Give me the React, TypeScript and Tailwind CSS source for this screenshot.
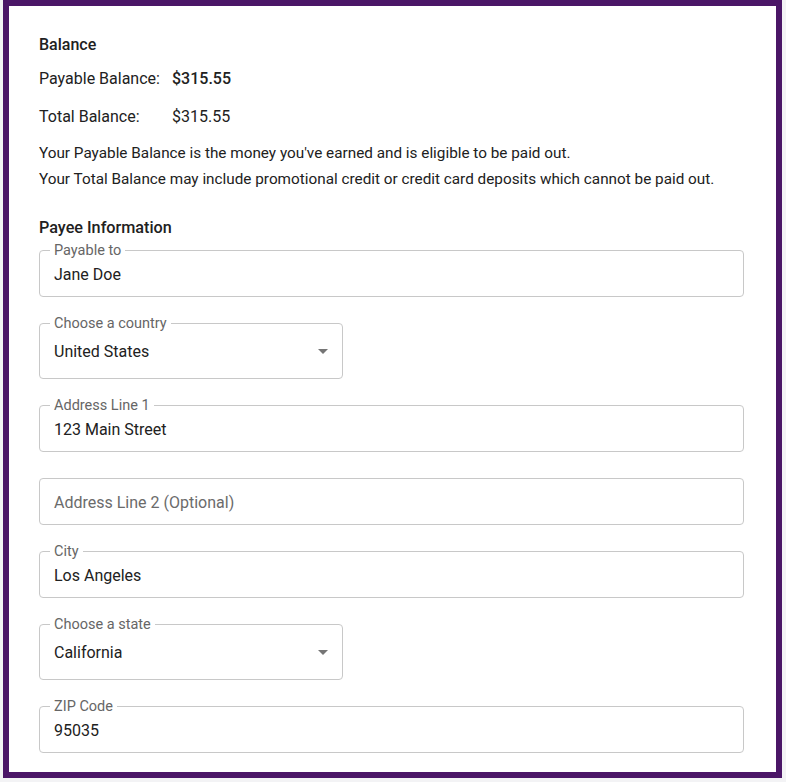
import React from 'react';

type FieldProps = {
  label?: string;
  value?: string;
  placeholder?: string;
  select?: boolean;
  half?: boolean;
};

function ArrowDown() {
  return (
    <svg width="24" height="24" viewBox="0 0 24 24" className="absolute right-[7px] top-1/2 -translate-y-1/2 fill-[#757575]">
      <path d="M7 10l5 5 5-5z" />
    </svg>
  );
}

function Field({ label, value, placeholder, select, half }: FieldProps) {
  return (
    <div
      className={`relative flex items-center rounded-[4px] border border-[#c8c8c8] pl-[14px] ${
        select ? 'h-[56px] pt-[1px]' : 'h-[47px] pt-[3px]'
      } ${half ? 'w-[304px]' : 'w-full'}`}
    >
      {label && (
        <span className="absolute left-[10px] top-[-8px] bg-white px-[4px] text-[14.5px] leading-[16px] text-[#666666]">
          {label}
        </span>
      )}
      {value ? (
        <span className="text-[16px] text-[#212121]">{value}</span>
      ) : (
        <span className="text-[16px] text-[#6b6b6b]">{placeholder}</span>
      )}
      {select && <ArrowDown />}
    </div>
  );
}

export default function App() {
  return (
    <div className="min-h-[782px] w-[786px] bg-[#f3f3f5] font-['Roboto',sans-serif] text-[#212121]">
      <div className="ml-[3px] h-[778px] w-[779px] border-[6px] border-[#4b1667] bg-white pl-[30px] pr-[32px] pt-[27px]">
        <div className="flex flex-col text-[16px] leading-[24px]">
          <div className="font-medium">Balance</div>
          <div className="mt-[10px] flex">
            <span className="w-[133px]">Payable Balance:</span>
            <span className="font-medium">$315.55</span>
          </div>
          <div className="mt-[14px] flex">
            <span className="w-[133px]">Total Balance:</span>
            <span>$315.55</span>
          </div>
          <div className="mt-[12px] text-[15.3px]">
            Your Payable Balance is the money you've earned and is eligible to be paid out.
          </div>
          <div className="mt-[2px] text-[15.3px]">
            Your Total Balance may include promotional credit or credit card deposits which cannot be paid out.
          </div>
          <div className="mt-[25px] text-[16.2px] font-medium">Payee Information</div>
        </div>
        <div className="mt-[10px] flex flex-col gap-[26px]">
          <Field label="Payable to" value="Jane Doe" />
          <Field label="Choose a country" value="United States" select half />
          <Field label="Address Line 1" value="123 Main Street" />
          <Field placeholder="Address Line 2 (Optional)" />
          <Field label="City" value="Los Angeles" />
          <Field label="Choose a state" value="California" select half />
          <Field label="ZIP Code" value="95035" />
        </div>
      </div>
    </div>
  );
}
